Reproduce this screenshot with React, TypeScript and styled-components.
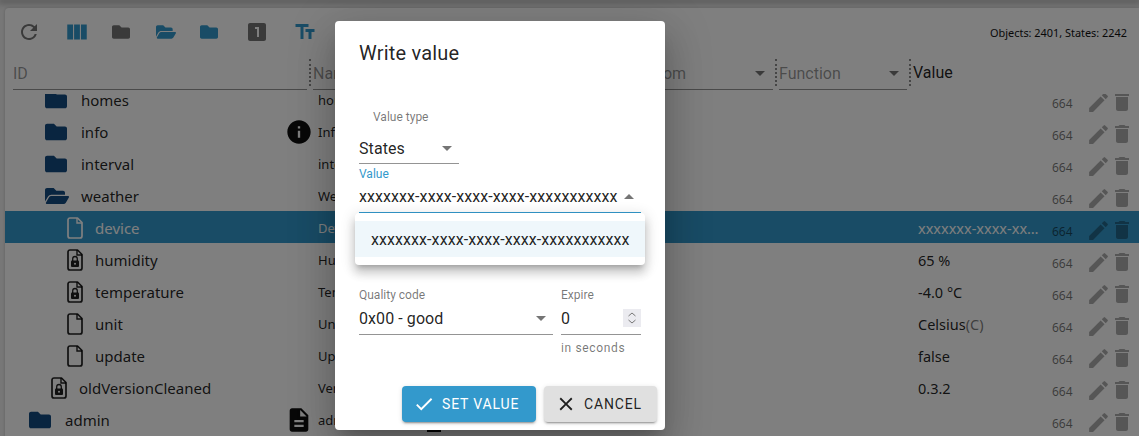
import React from 'react';
import styled, { createGlobalStyle } from 'styled-components';
import { FaFolder, FaFolderOpen } from 'react-icons/fa';
import {
  MdCheck,
  MdClose,
  MdDelete,
  MdDescription,
  MdEdit,
  MdInfo,
  MdLooksOne,
  MdRefresh,
  MdTextFields,
  MdViewColumn,
} from 'react-icons/md';

const PRIMARY = '#3399cc';
const UUID = 'xxxxxxx-xxxx-xxxx-xxxx-xxxxxxxxxxx';

const GlobalStyle = createGlobalStyle`
  html, body {
    margin: 0;
    padding: 0;
    background: #eeeeee;
  }
  * {
    box-sizing: border-box;
  }
`;

const Page = styled.div`
  position: relative;
  width: 1139px;
  height: 436px;
  overflow: hidden;
  font-family: 'Noto Sans', sans-serif;
`;

const TopBar = styled.div`
  height: 0;
  box-shadow: 0 1px 6px 2px rgba(0, 0, 0, 0.35);
`;

const Paper = styled.div`
  margin: 8px 0 0 5px;
  height: 440px;
  background: #fff;
  border-radius: 4px 0 0 0;
  box-shadow: 0 0 3px rgba(0, 0, 0, 0.2);
`;

const Toolbar = styled.div`
  display: flex;
  align-items: center;
  height: 48px;
`;

const ToolButton = styled.div<{ $w: number; $color: string }>`
  display: flex;
  align-items: center;
  justify-content: center;
  width: ${({ $w }) => $w}px;
  color: ${({ $color }) => $color};
`;

const Counter = styled.div`
  margin-left: auto;
  padding-right: 12px;
  font-size: 10.9px;
  color: #111;
`;

const HeaderRow = styled.div`
  display: flex;
  align-items: flex-start;
  height: 35px;
  padding-left: 8px;
  margin-top: 3px;
`;

const HeaderCell = styled.div<{ $w: number }>`
  display: flex;
  width: ${({ $w }) => $w}px;
  height: 27px;
  padding-right: 2px;
  border-right: 2px dotted rgba(0, 0, 0, 0.45);
`;

const HeaderField = styled.div<{ $gap?: number }>`
  display: flex;
  flex: 1;
  align-items: center;
  justify-content: space-between;
  height: 31px;
  margin-left: ${({ $gap }) => $gap ?? 0}px;
  padding: 0 8px 1px 0;
  border-bottom: 1px solid rgba(0, 0, 0, 0.42);
  font: 16px Roboto, sans-serif;
  color: rgba(0, 0, 0, 0.42);
`;

const ValueHeading = styled.div`
  margin: 4px 0 0 2px;
  font: 16px Roboto, sans-serif;
  color: rgba(0, 0, 0, 0.87);
`;

const Triangle = styled.span<{ $up?: boolean }>`
  width: 0;
  height: 0;
  border-left: 5px solid transparent;
  border-right: 5px solid transparent;
  ${({ $up }) => ($up ? 'border-bottom' : 'border-top')}: 5px solid rgba(0, 0, 0, 0.54);
`;

const ListClip = styled.div`
  height: 345px;
  overflow: hidden;
`;

const List = styled.div`
  margin-top: -11px;
`;

const Row = styled.div<{ $selected?: boolean }>`
  display: grid;
  grid-template-columns: 305px 608px 122px 12px 20px 1fr;
  align-items: center;
  height: 32px;
  padding-top: 2px;
  background: ${({ $selected }) => ($selected ? PRIMARY : 'transparent')};
  color: ${({ $selected }) => ($selected ? '#fff' : 'rgba(0, 0, 0, 0.87)')};
`;

const IdCell = styled.div<{ $indent: number }>`
  display: flex;
  align-items: center;
  padding-left: ${({ $indent }) => $indent}px;
  font-size: 15px;
`;

const FolderSlot = styled.span`
  display: flex;
  width: 36px;
  color: #134a80;
`;

const FileSlot = styled.span`
  display: flex;
  width: 28px;
`;

const IdEnd = styled.span`
  display: flex;
  margin: 0 -3px 0 auto;
  color: #111;
`;

const NameCell = styled.div`
  display: flex;
  align-items: center;
  padding-left: 8px;
  font-size: 13px;
`;

const RoleMark = styled.span`
  width: 14px;
  height: 16px;
  margin: 7px 0 0 70px;
  background: #000;
`;

const ValueCell = styled.div`
  overflow: hidden;
  font-size: 14.5px;
  white-space: nowrap;
  text-overflow: ellipsis;
`;

const Unit = styled.span`
  opacity: 0.6;
`;

const Rights = styled.div`
  grid-column: 5;
  margin-top: 6px;
  font-size: 12px;
  color: rgba(0, 0, 0, 0.55);
`;

const Actions = styled.div`
  display: flex;
  align-items: center;
  margin-top: 4px;
  padding-left: 14px;
  color: rgba(0, 0, 0, 0.32);

  svg + svg {
    margin-left: -1px;
  }
`;

const Scrim = styled.div`
  position: absolute;
  inset: 0;
  background: rgba(0, 0, 0, 0.5);
  padding: 21px 0 0 335px;
`;

const Dialog = styled.div`
  position: relative;
  display: flex;
  flex-direction: column;
  width: 330px;
  height: 409px;
  padding: 0 24px;
  background: #fff;
  border-radius: 4px;
  font-family: Roboto, sans-serif;
  color: rgba(0, 0, 0, 0.87);
  box-shadow: 0 11px 15px -7px rgba(0, 0, 0, 0.2), 0 24px 38px 3px rgba(0, 0, 0, 0.14),
    0 9px 46px 8px rgba(0, 0, 0, 0.12);
`;

const Title = styled.h2`
  margin: 19px 0 0;
  font-size: 20px;
  line-height: 26px;
  font-weight: 400;
  letter-spacing: 0.2px;
`;

const Label = styled.div<{ $active?: boolean; $inset?: number; $top: number }>`
  margin: ${({ $top }) => $top}px 0 0 ${({ $inset }) => $inset ?? 0}px;
  font-size: 12px;
  line-height: 14px;
  color: ${({ $active }) => ($active ? PRIMARY : 'rgba(0, 0, 0, 0.54)')};
`;

const Field = styled.div<{ $active?: boolean; $w: number; $h: number; $top?: number }>`
  display: flex;
  align-items: center;
  justify-content: space-between;
  width: ${({ $w }) => $w}px;
  height: ${({ $h }) => $h}px;
  margin-top: ${({ $top }) => $top ?? 0}px;
  padding-right: 7px;
  font-size: 16px;
  letter-spacing: 0.08px;
  border-bottom: ${({ $active }) => ($active ? `2px solid ${PRIMARY}` : '1px solid rgba(0, 0, 0, 0.42)')};
`;

const Menu = styled.div`
  position: absolute;
  top: 192px;
  left: 20px;
  width: 290px;
  padding: 8px 0;
  background: #fff;
  border-radius: 4px;
  box-shadow: 0 5px 5px -3px rgba(0, 0, 0, 0.2), 0 8px 10px 1px rgba(0, 0, 0, 0.14),
    0 3px 14px 2px rgba(0, 0, 0, 0.12);
`;

const MenuItem = styled.div`
  display: flex;
  align-items: center;
  height: 36px;
  padding-left: 16px;
  font-size: 16px;
  letter-spacing: 0.08px;
  background: rgba(51, 153, 204, 0.08);
`;

const FieldRow = styled.div`
  display: flex;
  gap: 8px;
  margin-top: 74px;
`;

const Stack = styled.div`
  display: flex;
  flex-direction: column;
`;

const Spinner = styled.span`
  display: flex;
  align-items: center;
  justify-content: center;
  width: 18px;
  height: 18px;
  margin-right: -7px;
  background: #ebebf0;
`;

const Helper = styled.div`
  margin-top: 6px;
  font-size: 12px;
  line-height: 14px;
  letter-spacing: 0.65px;
  color: rgba(0, 0, 0, 0.54);
`;

const Buttons = styled.div`
  display: flex;
  justify-content: flex-end;
  gap: 8px;
  margin: auto -16px 8px 0;
`;

const Button = styled.div<{ $primary?: boolean; $w: number }>`
  display: flex;
  align-items: center;
  gap: 7px;
  width: ${({ $w }) => $w}px;
  height: 36px;
  padding-left: 11px;
  border-radius: 4px;
  font-size: 14px;
  letter-spacing: 0.85px;
  background: ${({ $primary }) => ($primary ? PRIMARY : '#e0e0e0')};
  color: ${({ $primary }) => ($primary ? '#fff' : 'rgba(0, 0, 0, 0.87)')};
  box-shadow: 0 3px 1px -2px rgba(0, 0, 0, 0.2), 0 2px 2px 0 rgba(0, 0, 0, 0.14),
    0 1px 5px 0 rgba(0, 0, 0, 0.12);
`;

const FileIcon = ({ locked }: { locked?: boolean }) => (
  <svg width="16" height="22" viewBox="0 0 16 22" fill="none">
    <path
      d="M3 1h7.5L15 5.5V19a2 2 0 0 1-2 2H3a2 2 0 0 1-2-2V3a2 2 0 0 1 2-2z"
      stroke="currentColor"
      strokeWidth="1.7"
      strokeLinejoin="round"
    />
    <path d="M10 1v5h5" stroke="currentColor" strokeWidth="1.4" />
    {locked && (
      <>
        <rect x="4" y="11.5" width="8" height="6.5" rx="1" fill="currentColor" />
        <path d="M5.7 12V9.8a2.3 2.3 0 0 1 4.6 0V12" stroke="currentColor" strokeWidth="1.3" />
        <circle cx="8" cy="14.7" r="1" fill="#fff" />
      </>
    )}
  </svg>
);

type RowData = {
  id: string;
  indent: number;
  kind: 'folder' | 'open' | 'file' | 'locked';
  name: string;
  value?: string;
  unit?: string;
  selected?: boolean;
};

const rows: RowData[] = [
  { id: 'homes', indent: 40, kind: 'folder', name: 'homes' },
  { id: 'info', indent: 40, kind: 'folder', name: 'Info' },
  { id: 'interval', indent: 40, kind: 'folder', name: 'interval' },
  { id: 'weather', indent: 40, kind: 'open', name: 'Weather' },
  { id: 'device', indent: 62, kind: 'file', name: 'Device', value: UUID, selected: true },
  { id: 'humidity', indent: 62, kind: 'locked', name: 'Humidity', value: '65 %' },
  { id: 'temperature', indent: 62, kind: 'locked', name: 'Temperature', value: '-4.0 °C' },
  { id: 'unit', indent: 62, kind: 'file', name: 'Unit', value: 'Celsius', unit: '(C)' },
  { id: 'update', indent: 62, kind: 'file', name: 'Update', value: 'false' },
  { id: 'oldVersionCleaned', indent: 46, kind: 'locked', name: 'Version', value: '0.3.2' },
  { id: 'admin', indent: 24, kind: 'folder', name: 'admin' },
];

const tools = [
  { w: 48, color: 'rgba(0, 0, 0, 0.54)', icon: <MdRefresh size={24} /> },
  { w: 48, color: PRIMARY, icon: <MdViewColumn size={26} /> },
  { w: 40, color: 'rgba(0, 0, 0, 0.54)', icon: <FaFolder size={18} /> },
  { w: 50, color: PRIMARY, icon: <FaFolderOpen size={20} /> },
  { w: 36, color: PRIMARY, icon: <FaFolder size={18} /> },
  { w: 60, color: 'rgba(0, 0, 0, 0.54)', icon: <MdLooksOne size={24} /> },
  { w: 36, color: PRIMARY, icon: <MdTextFields size={24} /> },
];

const TreeIcon = ({ kind }: { kind: RowData['kind'] }) => {
  if (kind === 'folder') return <FolderSlot><FaFolder size={22} /></FolderSlot>;
  if (kind === 'open') return <FolderSlot><FaFolderOpen size={24} /></FolderSlot>;
  return <FileSlot><FileIcon locked={kind === 'locked'} /></FileSlot>;
};

const App: React.FC = () => (
  <Page>
    <GlobalStyle />
    <TopBar />
    <Paper>
      <Toolbar>
        {tools.map((tool, idx) => (
          <ToolButton key={idx} $w={tool.w} $color={tool.color}>{tool.icon}</ToolButton>
        ))}
        <Counter>Objects: 2401, States: 2242</Counter>
      </Toolbar>
      <HeaderRow>
        <HeaderCell $w={298}><HeaderField>ID</HeaderField></HeaderCell>
        <HeaderCell $w={336}><HeaderField $gap={2}>Name</HeaderField></HeaderCell>
        <HeaderCell $w={130}><HeaderField $gap={2}>From<Triangle /></HeaderField></HeaderCell>
        <HeaderCell $w={134}><HeaderField $gap={2}>Function<Triangle /></HeaderField></HeaderCell>
        <ValueHeading>Value</ValueHeading>
      </HeaderRow>
      <ListClip>
        <List>
          {rows.map((row) => (
            <Row key={row.id} $selected={row.selected}>
              <IdCell $indent={row.indent}>
                <TreeIcon kind={row.kind} />
                {row.id}
                {row.id === 'info' && <IdEnd><MdInfo size={28} /></IdEnd>}
                {row.id === 'admin' && <IdEnd><MdDescription size={28} /></IdEnd>}
              </IdCell>
              <NameCell>
                {row.name}
                {row.id === 'admin' && <RoleMark />}
              </NameCell>
              <ValueCell>
                {row.value}
                {row.unit && <Unit>{row.unit}</Unit>}
              </ValueCell>
              <Rights>664</Rights>
              <Actions>
                <MdEdit size={25} />
                <MdDelete size={24} />
              </Actions>
            </Row>
          ))}
        </List>
      </ListClip>
    </Paper>
    <Scrim>
      <Dialog>
        <Title>Write value</Title>
        <Label $inset={14} $top={44}>Value type</Label>
        <Field $w={100} $h={31} $top={9}>States<Triangle /></Field>
        <Label $active $top={3}>Value</Label>
        <Field $active $w={282} $h={33}>{UUID}<Triangle $up /></Field>
        <Menu><MenuItem>{UUID}</MenuItem></Menu>
        <FieldRow>
          <Stack>
            <Label $top={0}>Quality code</Label>
            <Field $w={194} $h={33}>0x00 - good<Triangle /></Field>
          </Stack>
          <Stack>
            <Label $top={0}>Expire</Label>
            <Field $w={80} $h={33}>
              0
              <Spinner>
                <svg width="12" height="14" viewBox="0 0 12 14" fill="none" stroke="#777" strokeWidth="1">
                  <path d="M2.5 5 6 2l3.5 3M2.5 9 6 12l3.5-3" />
                </svg>
              </Spinner>
            </Field>
            <Helper>in seconds</Helper>
          </Stack>
        </FieldRow>
        <Buttons>
          <Button $primary $w={134}><MdCheck size={22} />SET VALUE</Button>
          <Button $w={113}><MdClose size={22} />CANCEL</Button>
        </Buttons>
      </Dialog>
    </Scrim>
  </Page>
);

export default App;
